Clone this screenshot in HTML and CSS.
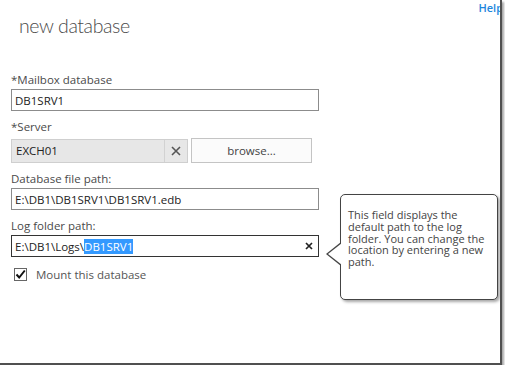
FILE: index.html
```html
<!doctype html>
<html>
<head>
	<meta charset="utf-8" />
	<title>new database</title>
<link rel="stylesheet" href="styles.css">
</head>
<body>
<div class="frame">
	<div class="topbar"><a class="help" href="#">Help</a></div>

	<h1 class="title">new database</h1>

	<div class="form">
		<div class="field first">
			<label class="lbl">*Mailbox database</label>
			<div class="box"><span class="val">DB1SRV1</span></div>
		</div>

		<div class="field">
			<label class="lbl">*Server</label>
			<div class="row">
				<div class="picker">
					<span class="val">EXCH01</span>
					<span class="clear">
						<svg width="10" height="10" viewBox="0 0 10 10"><path d="M1 1L9 9M9 1L1 9" stroke="#555" stroke-width="1.6"/></svg>
					</span>
				</div>
				<div class="browse">browse...</div>
			</div>
		</div>

		<div class="field">
			<label class="lbl">Database file path:</label>
			<div class="box"><span class="val">E:\DB1\DB1SRV1\DB1SRV1.edb</span></div>
		</div>

		<div class="field">
			<label class="lbl">Log folder path:</label>
			<div class="box focus">
				<span class="val">E:\DB1\Logs\<span class="sel">DB1SRV1</span></span>
				<svg class="x" width="8" height="8" viewBox="0 0 8 8"><path d="M1 1L7 7M7 1L1 7" stroke="#222" stroke-width="1.7"/></svg>
			</div>
		</div>

		<div class="check">
			<span class="cb">
				<svg width="13" height="13" viewBox="0 0 13 13"><path d="M2.5 6.5L5.2 9.5L10.8 2.5" fill="none" stroke="#111" stroke-width="2"/></svg>
			</span>
			<span class="cbtext">Mount this database</span>
		</div>
	</div>

	<div class="tip">
		This field displays the default path to the log folder. You can change the location by entering a new path.
	</div>
</div>
</body>
</html>
```

FILE: styles.css
```css
body {
	margin: 0;
	background: #fff;
	font-family: "Open Sans", "Noto Sans", sans-serif;
	color: #444;
}

div.frame {
	position: relative;
	width: 500px;
	height: 363px;
	border-right:  2px solid #505050;
	border-bottom: 2px solid #505050;
	box-shadow: 2px 2px 2px rgba(0,0,0,0.35);
	overflow: hidden;
	background: #fff;
}

div.topbar {
	display: flex;
	justify-content: flex-end;
	height: 14px;
	padding-top: 1px;
	margin-right: -3px;
}

a.help {
	color: #1d87dd;
	text-decoration: none;
	font-size: 11px;
	line-height: 14px;
	font-weight: 600;
}

h1.title {
	margin: 0 0 0 19px;
	font-family: Lato, "Open Sans", sans-serif;
	font-size: 19.5px;
	font-weight: 300;
	letter-spacing: -0.4px;
	line-height: 22px;
	color: #4a4a4a;
}

div.form {
	width: 308px;
	padding-left: 11px;
}

div.field {
	margin-top: 9px;
}

div.field.first {
	margin-top: 36px;
}

label.lbl {
	display: block;
	font-size: 11.5px;
	line-height: 14px;
	margin-bottom: 2px;
	color: #4a4a4a;
}

div.box {
	display: flex;
	align-items: center;
	height: 20px;
	border: 1px solid #8c8c8c;
	padding: 0 3px;
}

div.box.focus {
	border-color: #333;
}

span.val {
	font-size: 11.5px;
	color: #222;
	flex: 1;
	white-space: pre;
}

span.sel {
	background: #3399ff;
	color: #fff;
}

svg.x {
	margin-right: 2px;
}

div.row {
	display: flex;
	align-items: center;
	gap: 3px;
	margin-top: 4px;
	height: 25px;
}

div.picker {
	display: flex;
	align-items: center;
	width: 177px;
	height: 24px;
	border: 1px solid #cfcfcf;
	background: #e7e7e7;
	padding-left: 4px;
	box-sizing: border-box;
}

span.clear {
	display: flex;
	align-items: center;
	justify-content: center;
	width: 22px;
	height: 100%;
	border-left: 1px solid #d2d2d2;
}

div.browse {
	width: 119px;
	height: 23px;
	line-height: 23px;
	border: 1px solid #c4c4c4;
	background: #fbfbfb;
	text-align: center;
	font-size: 11.5px;
	color: #444;
}

div.check {
	display: flex;
	align-items: center;
	gap: 9px;
	margin-top: 10px;
	padding-left: 3px;
}

span.cb {
	width: 13px;
	height: 13px;
	border: 1px solid #666;
	box-sizing: border-box;
	display: flex;
	align-items: center;
	justify-content: center;
}

span.cb svg {
	margin: -1px;
}

span.cbtext {
	font-size: 11.5px;
	color: #555;
}

div.tip {
	position: absolute;
	left: 340px;
	top: 194px;
	width: 143px;
	height: 88px;
	padding: 14px 6px 2px 7px;
	border: 1px solid #444;
	border-radius: 5px;
	box-shadow: 2px 2px 3px rgba(0,0,0,0.35);
	background: #fff;
	font-size: 11px;
	line-height: 11.8px;
	color: #444;
}

div.tip::before,
div.tip::after {
	content: "";
	position: absolute;
	top: 47px;
	border-style: solid;
	border-color: transparent;
}

div.tip::before {
	left: -15px;
	border-width: 12px 15px 12px 0;
	border-right-color: #444;
}

div.tip::after {
	left: -13px;
	top: 48px;
	border-width: 11px 14px 11px 0;
	border-right-color: #fff;
}
```
